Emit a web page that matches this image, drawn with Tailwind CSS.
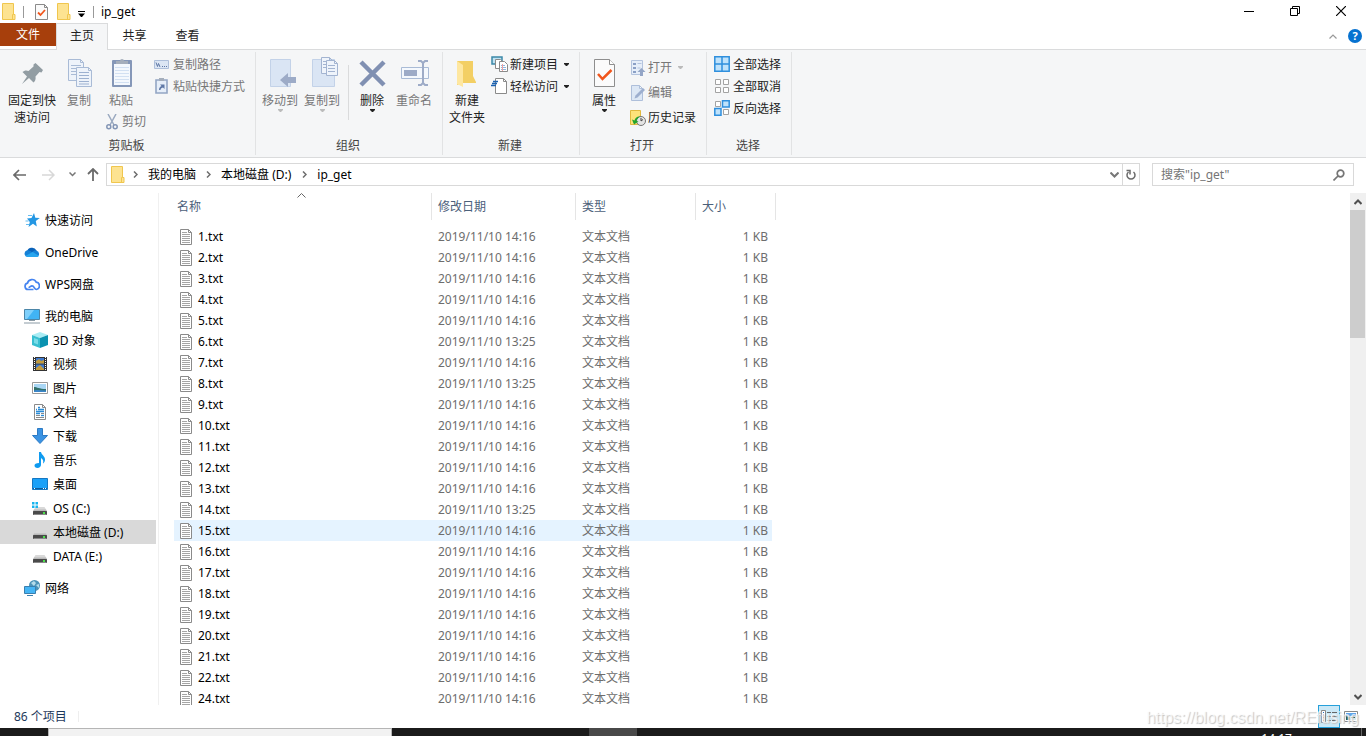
<!DOCTYPE html>
<html lang="zh-CN">
  <head>
    <meta charset="UTF-8" />
    <meta name="viewport" content="width=device-width, initial-scale=1.0" />
    <title>ip_get</title>
    <script src="https://cdn.jsdelivr.net/npm/@tailwindcss/browser@4"></script>
  </head>
  <body>
    <!-- Shared icons -->
    <svg class="hidden">
      <symbol id="folder" viewBox="0 0 14 17">
        <path d="M.5.5h11v11h1.500v5H.5z" fill="#fde391" stroke="#f0c64e" />
        <path d="M10.500 16v-4.500h1" fill="none" stroke="#f0c64e" />
      </symbol>
      <symbol id="caret" viewBox="0 0 5 3">
        <path d="M0 0h5v1L3 3H2L0 1z" fill="currentColor" />
      </symbol>
      <symbol id="crumb" viewBox="0 0 5 7">
        <path d="M1 .5l3 3-3 3" fill="none" stroke="#6d6d6d" stroke-width="1.500" />
      </symbol>
      <symbol id="drive" viewBox="0 0 16 16">
        <path d="M3.500 7h9L15 11H1z" fill="#d9d9d9" />
        <path d="M2 9.500h12l1 2H1z" fill="#b9b9b9" />
        <rect x="1" y="11" width="14" height="4" rx=".5" fill="#4a4a4a" />
        <path d="M1.500 14.500h13" stroke="#8a8a8a" />
        <rect x="11" y="12" width="2" height="2" fill="#4be34b" />
      </symbol>
    </svg>

    <div
      class="flex flex-col h-screen overflow-hidden bg-white text-black text-[12px] leading-[17px] font-['Noto_Sans','Noto_Sans_CJK_SC',sans-serif]"
    >
      <!-- Title bar -->
      <header class="shrink-0 h-[23px] flex items-center">
        <svg class="w-[14px] h-[17px] ml-[2px]"><use href="#folder" /></svg>
        <div class="w-px h-3 bg-[#999] ml-[7px]"></div>
        <button class="ml-[11px]" aria-label="属性">
          <svg class="block w-[13px] h-4" viewBox="0 0 13 16">
            <path d="M.5.5h9l3 3v12H.5z" fill="#fafafa" stroke="#8a8a8a" />
            <path d="M9.500.5v3h3" fill="none" stroke="#8a8a8a" />
            <path d="M3 8.500l2.500 2.500L10 6" fill="none" stroke="#f1561c" stroke-width="1.800" />
          </svg>
        </button>
        <button class="ml-[9px]" aria-label="新建文件夹">
          <svg class="block w-[14px] h-[17px]"><use href="#folder" /></svg>
        </button>
        <button class="ml-[7px]" aria-label="自定义快速访问工具栏">
          <svg class="block w-[7px] h-[6px] mt-1" viewBox="0 0 7 6">
            <path d="M0 .5h7" stroke="#000" />
            <path d="M0 2.500h7L4 6H3z" />
          </svg>
        </button>
        <div class="w-px h-3 bg-[#999] ml-2"></div>
        <h1 class="ml-[7px] text-[12px]">ip_get</h1>
        <div class="ml-auto mr-[2px] flex items-center h-full">
          <button class="w-[46px] h-[21px] self-start flex items-center justify-center" aria-label="最小化">
            <svg class="w-[10px] h-[10px]" viewBox="0 0 10 10"><path d="M0 5.500h10" stroke="#000" /></svg>
          </button>
          <button class="w-[46px] h-[21px] self-start flex items-center justify-center" aria-label="向下还原">
            <svg class="w-[10px] h-[10px]" viewBox="0 0 10 10" fill="none" stroke="#000">
              <path d="M.5 2.500h7v7h-7zM2.500 2.500v-2h7v7h-2" />
            </svg>
          </button>
          <button class="w-[46px] h-[21px] self-start flex items-center justify-center" aria-label="关闭">
            <svg class="w-[10px] h-[10px]" viewBox="0 0 10 10"><path d="M0 0l10 10M10 0L0 10" stroke="#000" stroke-width="1.200" /></svg>
          </button>
        </div>
      </header>

      <!-- Ribbon tabs -->
      <nav class="shrink-0 h-[27px] flex text-[#222] border-b border-[#dadbdc]">
        <button class="w-14 h-[23px] bg-[#a73f0c] text-white">文件</button>
        <button class="w-[52px] h-[27px] pb-[3px] bg-[#f5f6f7] border border-b-0 border-[#dadbdc]">主页</button>
        <button class="w-[53px] pb-[2px]">共享</button>
        <button class="w-[53px] pb-[2px]">查看</button>
        <div class="ml-auto mr-1 flex items-center gap-[11px]">
          <button aria-label="最小化功能区">
            <svg class="block w-[8px] h-[5px]" viewBox="0 0 8 5"><path d="M.5 4.500L4 1l3.500 3.500" fill="none" stroke="#999" stroke-width="1.200" /></svg>
          </button>
          <button class="size-[14px] rounded-full bg-[#0672d0] text-white text-[11px] leading-[14px] font-bold" aria-label="帮助">?</button>
        </div>
      </nav>

      <!-- Ribbon -->
      <section class="shrink-0 flex h-[108px] py-[2px] bg-[#f5f6f7] border-b border-[#dadbdc] text-[#222]">
        <div class="w-64 flex flex-col border-r border-[#e2e3e4]">
          <div class="flex-1 flex pl-1 pt-1">
            <button class="w-14 flex flex-col items-center justify-start">
              <svg class="size-9" viewBox="0 0 36 36">
                <path d="M19.500 8.500l2-1.500 7.500 7-1.500 2.500-2-.5-4 4.500c.5 3-.5 5-2 6l-4.500-4.500-7 6 5-7.500-4.500-4.500c1.500-1.500 4-2 6-1l5-4.500z" fill="#929da3" />
              </svg>
              <span>固定到快<br />速访问</span>
            </button>
            <button class="w-[38px] flex flex-col items-center justify-start text-[#777]" disabled>
              <svg class="size-9" viewBox="0 0 36 36" fill="#eef3fa" stroke="#a9bbd6">
                <path d="M7.500 3.500h12l3 3v18h-15zM19.500 3.500v3h3" />
                <path d="M10 9.500h10M10 12.500h10M10 15.500h10M10 18.500h10" />
                <path d="M15.500 11.500h12l3 3v16h-15zM27.500 11.500v3h3" />
                <path d="M18 16.500h10M18 19.500h10M18 22.500h10M18 25.500h10M18 28h10" stroke="#9db1d0" />
              </svg>
              <span>复制</span>
            </button>
            <div class="w-14">
              <button class="w-[46px] flex flex-col items-center justify-start text-[#777]" disabled>
                <svg class="size-9" viewBox="0 0 36 36">
                  <rect x="9" y="4" width="20" height="27" rx="1" fill="#8597b8" />
                  <path d="M11 8h16v21H11z" fill="#f4f8fd" />
                  <path d="M12 11.500h14M12 14.500h14M12 17.500h14M12 20.500h14M12 23.500h14M12 26.500h14" stroke="#d2e0f2" />
                  <path d="M13 8V5h4a2 2 0 014 0h4v3z" fill="#a5aebb" />
                </svg>
                <span>粘贴</span>
              </button>
              <button class="ml-2 mt-1 flex items-center gap-1 text-[#777]" disabled>
                <svg class="w-3 h-4" viewBox="0 0 12 16" fill="none" stroke="#9aa9c0" stroke-width="1.500">
                  <path d="M2 0l6 11M10 0L4 11" />
                  <circle cx="2.800" cy="12.800" r="2" stroke="#8395b5" />
                  <circle cx="9.200" cy="12.800" r="2" stroke="#8395b5" />
                </svg>
                <span>剪切</span>
              </button>
            </div>
            <div class="text-[#777] flex flex-col items-start -mt-[3px]">
              <button class="h-[22px] flex items-center gap-1 whitespace-nowrap" disabled>
                <svg class="w-[15px] h-[9px]" viewBox="0 0 15 9">
                  <path d="M.5.5h14v8H.5z" fill="#dce6f4" stroke="#aebfda" />
                  <path d="M2 2.500l1.500 4 1-3 1.500 3.500M8 6.500h1M10 6.500h1M12 6.500h1" fill="none" stroke="#5e77a5" />
                </svg>
                <span>复制路径</span>
              </button>
              <button class="h-[22px] flex items-center gap-1 whitespace-nowrap" disabled>
                <svg class="w-[15px] h-4" viewBox="0 0 15 16">
                  <path d="M2 2h11v13H2z" fill="#e6eef9" stroke="#93a5c4" stroke-width="1.600" />
                  <path d="M5 0h5v3H5z" fill="#a5aebb" />
                  <path d="M5 12c0-2 .5-3 2.500-4L6 6.500h4.500V11L9 9.500C7 10 6.500 11 6.500 12z" fill="#5f78a6" />
                </svg>
                <span>粘贴快捷方式</span>
              </button>
            </div>
          </div>
          <div class="text-center h-[18px] pr-[2px] text-[#444]">剪贴板</div>
        </div>

        <div class="w-[187px] flex flex-col border-r border-[#e2e3e4]">
          <div class="flex-1 flex pl-[3px] pt-1">
            <button class="w-[42px] flex flex-col items-center justify-start text-[#777]" disabled>
              <svg class="size-9" viewBox="0 0 36 36">
                <path d="M8.500 3.500h20v27h-20z" fill="#dae5f4" stroke="#c3d2e8" />
                <path d="M18 24l8-7v4h8v6h-8v4z" fill="#9dabc7" />
              </svg>
              <span>移动到</span>
              <svg class="w-[5px] h-[3px] text-[#bbb]"><use href="#caret" /></svg>
            </button>
            <button class="w-[42px] flex flex-col items-center justify-start text-[#777]" disabled>
              <svg class="size-9" viewBox="0 0 36 36">
                <path d="M8.500 3.500h22v27h-22z" fill="#dae5f4" stroke="#c3d2e8" />
                <g fill="#eff4fb" stroke="#a3b4d1">
                  <path d="M17.500 1.500h8l3 3v13h-11zM25.500 1.500v3h3M19 5.500h5M19 8.500h5M19 11.500h5" />
                  <path d="M22.500 4.500h8l3 3v12h-11zM30.500 4.500v3h3M24 9.500h7M24 12.500h7M24 15.500h7" />
                </g>
              </svg>
              <span>复制到</span>
              <svg class="w-[5px] h-[3px] text-[#bbb]"><use href="#caret" /></svg>
            </button>
            <div class="w-px h-[55px] mt-[9px] ml-[5px] mr-1 bg-[#dadbdc]"></div>
            <button class="w-[38px] flex flex-col items-center justify-start">
              <svg class="size-9" viewBox="0 0 36 36">
                <path d="M7 6l23 23M30 6L7 29" stroke="#8090b2" stroke-width="4.500" />
              </svg>
              <span>删除</span>
              <svg class="w-[5px] h-[3px]"><use href="#caret" /></svg>
            </button>
            <button class="w-[46px] flex flex-col items-center justify-start text-[#777]" disabled>
              <svg class="size-9" viewBox="0 0 36 36">
                <path d="M5.500 11.500h27v11h-27z" fill="#f4f8fd" stroke="#a9bbd6" />
                <path d="M8 14h13v6H8z" fill="#9dabc7" />
                <path d="M22 5h3l2 2 2-2h3M22 29h3l2-2 2 2h3M27 6v22" fill="none" stroke="#9dabc7" stroke-width="2" />
              </svg>
              <span>重命名</span>
            </button>
          </div>
          <div class="text-center h-[18px] pr-[2px] text-[#444]">组织</div>
        </div>

        <div class="w-[137px] flex flex-col border-r border-[#e2e3e4]">
          <div class="flex-1 flex pl-[2px] pt-1">
            <button class="w-[44px] mr-[2px] flex flex-col items-center justify-start">
              <svg class="size-9" viewBox="0 0 36 36">
                <path d="M8 5h16v15l3 6v1H14L8 29z" fill="#f3cf64" />
                <path d="M8 5l6 4v22l-6-3z" fill="#fee7a0" />
              </svg>
              <span>新建<br />文件夹</span>
            </button>
            <div class="flex flex-col items-start -mt-[3px]">
              <button class="h-[22px] flex items-center gap-[2px]">
                <svg class="w-[17px] h-4" viewBox="0 0 17 16">
                  <path d="M1 1h10v7H1z" fill="#bfe3f3" stroke="#3b88a8" stroke-width="1.500" />
                  <path d="M4.500 3.500h5l2 2v7h-7z" fill="#fff" stroke="#8a8a8a" />
                  <path d="M8.500 5.500h5l3 3v7h-8z" fill="#fff" stroke="#8a8a8a" />
                  <path d="M10 9.500h4M10 11.500h5M10 13.500h5" stroke="#8fb6df" />
                  <path d="M11.500 8v7" stroke="#f0a0a0" />
                </svg>
                <span>新建项目</span>
                <svg class="w-[5px] h-[3px] ml-1"><use href="#caret" /></svg>
              </button>
              <button class="h-[22px] flex items-center gap-[2px]">
                <svg class="w-[17px] h-4" viewBox="0 0 17 16">
                  <path d="M4.500.5h8l3 3v12h-11z" fill="#fff" stroke="#8a8a8a" />
                  <path d="M12.500.5v3h3" fill="none" stroke="#8a8a8a" />
                  <path d="M2 3.500h5M1 5.500h5M0 7.500h5" stroke="#1c62b0" stroke-width="1.300" />
                </svg>
                <span>轻松访问</span>
                <svg class="w-[5px] h-[3px] ml-1"><use href="#caret" /></svg>
              </button>
            </div>
          </div>
          <div class="text-center h-[18px] pr-[2px] text-[#444]">新建</div>
        </div>

        <div class="w-[127px] flex flex-col border-r border-[#e2e3e4]">
          <div class="flex-1 flex pt-1">
            <button class="w-12 mr-[2px] flex flex-col items-center justify-start">
              <svg class="size-9" viewBox="0 0 36 36">
                <path d="M8.500 3.500h15l5 5v22h-20z" fill="#fbfbfb" stroke="#8e8e8e" />
                <path d="M23.500 3.500v5h5" fill="#fff" stroke="#8e8e8e" />
                <path d="M12 18l4.500 5 9-9" fill="none" stroke="#f1561c" stroke-width="2.500" />
              </svg>
              <span>属性</span>
              <svg class="w-[5px] h-[3px]"><use href="#caret" /></svg>
            </button>
            <div class="flex flex-col items-start -mt-px">
              <button class="h-[25px] flex items-center gap-[2px] text-[#777]" disabled>
                <svg class="size-4" viewBox="0 0 16 16">
                  <path d="M1.500.5h11v14h-11z" fill="#e6eef9" stroke="#b4c4de" />
                  <path d="M3 3h3v2H3zM3 7h3v2H3zM3 11h3v2H3z" fill="#8ba0c6" />
                  <path d="M7.500 3.500h4M7.500 8h3" stroke="#b4c4de" />
                  <path d="M11.500 8l4 4h-2.500v4h-3v-4H7.500z" fill="#93a5c6" />
                </svg>
                <span>打开</span>
                <svg class="w-[5px] h-[3px] ml-1 text-[#bbb]"><use href="#caret" /></svg>
              </button>
              <button class="h-[25px] flex items-center gap-[2px] text-[#777]" disabled>
                <svg class="size-4" viewBox="0 0 16 16">
                  <path d="M1.500.5h8l3 3v12h-11zM9.500.5v3h3" fill="#dce7f5" stroke="#aebfda" />
                  <path d="M4.500 13.500l1-3L13 3l2 2-7.500 7.500z" fill="#9dafcf" />
                </svg>
                <span>编辑</span>
              </button>
              <button class="h-[25px] flex items-center gap-[2px]">
                <svg class="size-4" viewBox="0 0 16 16">
                  <path d="M.5.5h10v14H.5z" fill="#fde37a" stroke="#e0b93f" />
                  <circle cx="11" cy="11" r="4.500" fill="#e4e4e4" stroke="#777" />
                  <path d="M11 8v3l2-1.500" fill="none" stroke="#444" />
                  <path d="M2 9.500l2 5 4.500-3-2-.5c.5-2 1.500-3.500 4-4.500-3.500-.5-5.500 1.500-6 4z" fill="#23a52b" />
                </svg>
                <span>历史记录</span>
              </button>
            </div>
          </div>
          <div class="text-center h-[18px] pr-[2px] text-[#444]">打开</div>
        </div>

        <div class="w-[85px] flex flex-col border-r border-[#e2e3e4]">
          <div class="flex-1 flex flex-col items-start pl-[7px] pt-px">
            <button class="h-[22px] flex items-center gap-[3px]">
              <svg class="size-4" viewBox="0 0 16 16" fill="#bfe2fb" stroke="#2f8fdd" stroke-width="1.500">
                <path d="M.8.8H8v7.200H.8zM8 .8h7.200V8H8zM.8 8H8v7.200H.8zM8 8h7.200v7.200H8z" />
              </svg>
              <span>全部选择</span>
            </button>
            <button class="h-[22px] flex items-center gap-[3px]">
              <svg class="size-4" viewBox="0 0 16 16" fill="#fff" stroke="#a3a3a3">
                <path d="M1.500 1.500h5v5h-5zM9.500 1.500h5v5h-5zM1.500 9.500h5v5h-5zM9.500 9.500h5v5h-5z" />
              </svg>
              <span>全部取消</span>
            </button>
            <button class="h-[22px] flex items-center gap-[3px]">
              <svg class="size-4" viewBox="0 0 16 16">
                <path d="M1.500 1.500h5v5h-5zM9.500 9.500h5v5h-5z" fill="#fff" stroke="#a3a3a3" />
                <path d="M8.500.8h6.700V7H8.500zM.8 8.500H7v6.700H.8z" fill="#bfe2fb" stroke="#2f8fdd" stroke-width="1.500" />
              </svg>
              <span>反向选择</span>
            </button>
          </div>
          <div class="text-center h-[18px] pr-[2px] text-[#444]">选择</div>
        </div>
      </section>

      <!-- Address bar -->
      <section class="shrink-0 h-[35px] flex items-start pt-[5px] pr-3">
        <div class="w-[106px] h-[23px] flex items-center pl-[13px]">
          <button aria-label="后退">
            <svg class="block w-[13px] h-3" viewBox="0 0 13 12" fill="none" stroke="#6a6a6a" stroke-width="1.700"><path d="M6 1L1 6l5 5M1 6h12" /></svg>
          </button>
          <button class="ml-4" aria-label="前进" disabled>
            <svg class="block w-[13px] h-3" viewBox="0 0 13 12" fill="none" stroke="#d8d8d8" stroke-width="1.500"><path d="M7 1l5 5-5 5M12 6H0" /></svg>
          </button>
          <button class="ml-[14px]" aria-label="最近浏览的位置">
            <svg class="block w-[7px] h-[5px]" viewBox="0 0 7 5" fill="none" stroke="#777" stroke-width="1.500"><path d="M.5.5l3 3 3-3" /></svg>
          </button>
          <button class="ml-[11px]" aria-label="上移">
            <svg class="block w-3 h-[13px]" viewBox="0 0 12 13" fill="none" stroke="#6a6a6a" stroke-width="1.800"><path d="M1 6l5-5 5 5M6 1v12" /></svg>
          </button>
        </div>
        <div class="flex-1 h-[23px] flex items-center border border-[#d9d9d9] pl-1">
          <svg class="w-[14px] h-[17px]"><use href="#folder" /></svg>
          <svg class="w-[5px] h-[7px] ml-2"><use href="#crumb" /></svg>
          <a href="#" class="ml-[10px]">我的电脑</a>
          <svg class="w-[5px] h-[7px] ml-[10px]"><use href="#crumb" /></svg>
          <a href="#" class="ml-[10px]">本地磁盘 (D:)</a>
          <svg class="w-[5px] h-[7px] ml-[11px]"><use href="#crumb" /></svg>
          <a href="#" class="ml-[10px]">ip_get</a>
          <button class="ml-auto mr-[3px]" aria-label="以前的位置">
            <svg class="block w-[9px] h-[6px]" viewBox="0 0 9 6" fill="none" stroke="#777" stroke-width="2"><path d="M.5.5l4 4 4-4" /></svg>
          </button>
          <button class="w-[17px] h-full flex items-center justify-center border-l border-[#d9d9d9]" aria-label="刷新">
            <svg class="w-[10px] h-3" viewBox="0 0 10 12" fill="none" stroke="#6a6a6a" stroke-width="1.500"><path d="M2.500 3a4 4 0 105 0M.5 1.500h3.500v4" /></svg>
          </button>
        </div>
        <label class="ml-3 w-[202px] h-[23px] flex items-center border border-[#d9d9d9] pl-2 pr-2">
          <input type="search" aria-label="搜索" placeholder='搜索"ip_get"' class="flex-1 min-w-0 outline-none placeholder:text-[#757575]" />
          <svg class="w-3 h-3" viewBox="0 0 12 12" fill="none" stroke="#757575" stroke-width="1.700"><circle cx="7.500" cy="4.500" r="3.300" /><path d="M5 7l-4.500 4.500" /></svg>
        </label>
      </section>

      <main class="flex-1 min-h-0 flex">
        <!-- Navigation pane -->
        <aside class="w-[159px] shrink-0 border-r border-[#f0f0f0] pt-[15px]">
          <ul class="flex flex-col gap-2">
            <li>
              <a href="#" class="h-6 flex items-center pl-6 gap-[5px]">
                <svg class="size-4" viewBox="0 0 16 16">
                  <path d="M10 1l1.300 4.700 4.500.3-4 3 1 5.500L9 11.700 4.500 15l1.300-5L3 6.500l4.500-.5z" fill="#2497e3" />
                  <path d="M4 3.500h4M1.500 9h3M2 12.500h3" stroke="#66bdf0" />
                </svg>
                快速访问
              </a>
            </li>
            <li>
              <a href="#" class="h-6 flex items-center pl-6 gap-[5px]">
                <svg class="size-4" viewBox="0 0 16 16">
                  <path d="M3 8.500a5 5 0 019.500-2L14 9l-7 2z" fill="#0a62b9" />
                  <path d="M3.500 13A3.500 3.500 0 013 6.200c2 0 3 .5 5 2 1.500-1.500 3-2 4.500-1.500A3.300 3.300 0 0113 13z" fill="#1580d6" />
                  <path d="M1.200 12l7.500-4 6.500 4-2.200 1H3.500z" fill="#27a5ee" />
                </svg>
                OneDrive
              </a>
            </li>
            <li>
              <a href="#" class="h-6 flex items-center pl-6 gap-[5px]">
                <svg class="size-4" viewBox="0 0 16 16" fill="none" stroke="#4584f0" stroke-width="1.700">
                  <path d="M9.500 13.500H4a3.200 3.200 0 01-.5-6.300 4.600 4.600 0 018.700-1A3.700 3.700 0 0112.500 13.500c-2.500 0-2-3.700-4.500-3.700-1.500 0-2 1.700-3.500 1.700" />
                </svg>
                WPS网盘
              </a>
            </li>
            <li>
              <a href="#" class="h-6 flex items-center pl-6 gap-[5px]">
                <svg class="size-4" viewBox="0 0 16 16">
                  <path d="M.5 1.500h15v10H.5z" fill="#41b4f5" stroke="#4c86a8" />
                  <path d="M1 2h9L3 11H1z" fill="#7fd0fb" />
                  <path d="M5 12.500h6M0 15h16" stroke="#8a9aa5" />
                </svg>
                我的电脑
              </a>
              <ul>
                <li>
                  <a href="#" class="h-6 flex items-center pl-8 gap-[5px]">
                    <svg class="size-4" viewBox="0 0 16 16">
                      <path d="M8 0l8 3-8 3-8-3z" fill="#a9ecf4" />
                      <path d="M0 3l8 3v10l-8-3z" fill="#38bfd0" />
                      <path d="M16 3L8 6v10l8-3z" fill="#0a92b0" />
                      <path d="M2 6l4 1.500v5L2 11z" fill="#79dce8" />
                    </svg>
                    3D 对象
                  </a>
                </li>
                <li>
                  <a href="#" class="h-6 flex items-center pl-8 gap-[5px]">
                    <svg class="size-4" viewBox="0 0 16 16">
                      <path d="M1 1h14v14H1z" fill="#333" />
                      <path d="M4 2h8v5.500H4zM4 8.500h8V14H4z" fill="#3f7ad0" />
                      <path d="M4 5l3-2 2 2 3-1v3.500H4zM4 12l4-3 4 4v1H4z" fill="#c29a3c" />
                      <path d="M2.500 1v14M13.500 1v14" stroke="#fff" stroke-dasharray="1 1" />
                    </svg>
                    视频
                  </a>
                </li>
                <li>
                  <a href="#" class="h-6 flex items-center pl-8 gap-[5px]">
                    <svg class="size-4" viewBox="0 0 16 16">
                      <path d="M.5 2.500h15v11H.5z" fill="#fff" stroke="#999" />
                      <path d="M2 4h12v8H2z" fill="#a9d6f4" />
                      <path d="M2 7c3 0 5 2 12 2v3H2z" fill="#31706a" />
                      <path d="M2 10.500c4-1 8 0 12 0V12H2z" fill="#3b86c8" />
                    </svg>
                    图片
                  </a>
                </li>
                <li>
                  <a href="#" class="h-6 flex items-center pl-8 gap-[5px]">
                    <svg class="size-4" viewBox="0 0 16 16">
                      <path d="M2.500.5h8l3 3v12h-11zM10.500.5v3h3" fill="#fff" stroke="#8a8a8a" />
                      <path d="M4 5.500h1M6 3.500h2M6 5.500h6M4 7.500h8M4 9.500h4" stroke="#2b8bd6" stroke-width="1.400" />
                      <path d="M9 9.500h3M4 11.500h4M4 13.500h8" stroke="#8a8a8a" />
                      <path d="M9 11.500h3" stroke="#2b8bd6" stroke-width="1.400" />
                    </svg>
                    文档
                  </a>
                </li>
                <li>
                  <a href="#" class="h-6 flex items-center pl-8 gap-[5px]">
                    <svg class="size-4" viewBox="0 0 16 16"><path d="M5.500.5h5v7h5L8 15.500.5 7.500h5z" fill="#3a93e3" stroke="#2c7ac4" /></svg>
                    下载
                  </a>
                </li>
                <li>
                  <a href="#" class="h-6 flex items-center pl-8 gap-[5px]">
                    <svg class="size-4" viewBox="0 0 16 16">
                      <path d="M7 0h2c.5 3 4 4 4 7.500 0 2-1 3.500-2 4 .5-2 .5-4-2-5.500V13c0 1.500-1.500 3-3.500 3S2.500 15 2.500 13.500 4 11 7 11z" fill="#0f9bf0" />
                    </svg>
                    音乐
                  </a>
                </li>
                <li>
                  <a href="#" class="h-6 flex items-center pl-8 gap-[5px]">
                    <svg class="size-4" viewBox="0 0 16 16">
                      <path d="M.5 2.500h15v11H.5z" fill="#1ba1f8" stroke="#1577c2" />
                      <path d="M1 12.500h14" stroke="#0c5c9c" />
                      <path d="M2 12.500h1M11 12.500h1M13 12.500h1" stroke="#fff" />
                    </svg>
                    桌面
                  </a>
                </li>
                <li>
                  <a href="#" class="h-6 flex items-center pl-8 gap-[5px]">
                    <svg class="size-4" viewBox="0 0 16 16">
                      <use href="#drive" />
                      <path d="M0 2h2.500v2.500H0zM3.500 2H6v2.500H3.500zM0 5.500h2.500V8H0zM3.500 5.500H6V8H3.500z" fill="#18b4ee" />
                    </svg>
                    OS (C:)
                  </a>
                </li>
                <li>
                  <a href="#" class="h-6 flex items-center pl-8 gap-[5px] mr-[2px] bg-[#d9d9d9]" aria-current="true">
                    <svg class="size-4"><use href="#drive" /></svg>
                    本地磁盘 (D:)
                  </a>
                </li>
                <li>
                  <a href="#" class="h-6 flex items-center pl-8 gap-[5px]">
                    <svg class="size-4"><use href="#drive" /></svg>
                    DATA (E:)
                  </a>
                </li>
              </ul>
            </li>
            <li>
              <a href="#" class="h-6 flex items-center pl-6 gap-[5px]">
                <svg class="size-4" viewBox="0 0 16 16">
                  <circle cx="10.500" cy="5.500" r="5.500" fill="#4d94b8" />
                  <path d="M7 3l3-2 2 2-2 3zM12 5l3-1v4z" fill="#b5dcea" />
                  <path d="M.5 6.500h11v7H.5z" fill="#45b5f5" stroke="#3a7fae" />
                  <path d="M3 15.500h6" stroke="#3a7fae" />
                </svg>
                网络
              </a>
            </li>
          </ul>
        </aside>

        <!-- File list -->
        <div class="flex-1 min-w-0 overflow-hidden pl-[15px]">
          <table class="table-fixed border-separate border-spacing-0 w-[602px] text-[#6d6d6d]">
            <colgroup>
              <col class="w-[258px]" />
              <col class="w-[144px]" />
              <col class="w-[120px]" />
              <col class="w-[80px]" />
            </colgroup>
            <thead>
              <tr class="h-[33px] text-left align-top text-[#4c607a]">
                <th class="relative p-0 font-normal">
                  <div class="h-[27px] flex items-center pl-[3px] border-r border-[#e5e5e5]">名称</div>
                  <svg class="absolute top-0 left-[123px] w-[9px] h-[5px]" viewBox="0 0 9 5"><path d="M.5 4.500l4-4 4 4" fill="none" stroke="#666" /></svg>
                </th>
                <th class="p-0 font-normal"><div class="h-[27px] flex items-center pl-[6px] border-r border-[#e5e5e5]">修改日期</div></th>
                <th class="p-0 font-normal"><div class="h-[27px] flex items-center pl-[6px] border-r border-[#e5e5e5]">类型</div></th>
                <th class="p-0 font-normal"><div class="h-[27px] flex items-center pl-[6px] border-r border-[#e5e5e5]">大小</div></th>
              </tr>
            </thead>
            <tbody id="files"></tbody>
          </table>
          <template id="row">
            <tr class="h-[21px] data-hover:bg-[#e5f3ff]">
              <td class="p-0">
                <div class="flex items-center pl-[6px] gap-[6px] text-black">
                  <svg class="w-3 h-4" viewBox="0 0 12 16">
                    <path d="M.5.500h8l3 3v12H.5z" fill="#fff" stroke="#8a8a8a" />
                    <path d="M8.500.5v3h3" fill="none" stroke="#8a8a8a" />
                    <path d="M2 3.500h5M2 5.500h8M2 7.500h8M2 9.500h8M2 11.500h8M2 13.500h8" stroke="#a5a5a5" />
                  </svg>
                  <span data-name></span>
                </div>
              </td>
              <td class="p-0 pl-[6px]" data-date></td>
              <td class="p-0 pl-[6px]">文本文档</td>
              <td class="p-0 pr-1 text-right border-r-4 border-white">1 KB</td>
            </tr>
          </template>
        </div>

        <!-- Scrollbar -->
        <div class="w-4 shrink-0 flex flex-col bg-[#f0f0f0]">
          <button class="h-[17px] flex items-center justify-center" aria-label="向上滚动">
            <svg class="w-[8px] h-[6px]" viewBox="0 0 8 6"><path d="M.5 5L4 1.500 7.500 5" fill="none" stroke="#505050" stroke-width="2" /></svg>
          </button>
          <div class="h-32 mr-px bg-[#cdcdcd]"></div>
          <button class="mt-auto h-[17px] flex items-center justify-center" aria-label="向下滚动">
            <svg class="w-[8px] h-[6px]" viewBox="0 0 8 6"><path d="M.5 1L4 4.500 7.500 1" fill="none" stroke="#505050" stroke-width="2" /></svg>
          </button>
        </div>
      </main>

      <!-- Status bar -->
      <footer class="relative shrink-0 h-[23px] flex items-center pl-[14px] pr-2 text-[#1e395b]">
        <span>86 个项目</span>
        <div class="w-px h-[11px] ml-[11px] bg-[#eee]"></div>
        <button class="ml-auto w-[22px] h-[23px] flex items-center justify-center bg-[#cbe8f6] border border-[#26a0da]" aria-label="详细信息">
          <svg class="w-4 h-[13px]" viewBox="0 0 16 13">
            <path d="M.5.5h4v12h-4z" fill="#fff" stroke="#888" />
            <path d="M2 2.500h1M2 5h1" stroke="#2b6fc0" />
            <path d="M2 7.500h1M2 10.500h1" stroke="#d05030" />
            <path d="M6 2.500h4M11 2.500h5M6 6.500h4M11 6.500h5M6 10.500h4M11 10.500h5" stroke="#666" />
          </svg>
        </button>
        <button class="ml-1" aria-label="大缩略图">
          <svg class="block w-[14px] h-[11px]" viewBox="0 0 14 11">
            <path d="M.5.5h13v10H.5z" fill="#fff" stroke="#888" />
            <path d="M2 2h10v7H2z" fill="#5fa5ea" />
            <path d="M2 5h10v4H2z" fill="#d5e8ee" />
            <path d="M2 5l4 1v3H2zM7 6h4v1H7z" fill="#2d5c4e" />
          </svg>
        </button>
        <div class="absolute right-[7px] top-1 text-[16px] leading-[18px] font-['Liberation_Sans',sans-serif] text-white/70 text-shadow-[1px_1px_1px_#c4c4c4]">https://blog.csdn.net/REfusing</div>
      </footer>

      <!-- Taskbar -->
      <div class="shrink-0 h-2 flex overflow-hidden bg-[#1b1b1b]">
        <div class="w-[344px] ml-12 bg-[#f2f2f2] border border-b-0 border-[#b5b5b5]"></div>
        <div class="w-12 ml-[197px] bg-[#484848]"></div>
        <div class="ml-auto mr-[69px] pt-1 text-white leading-[14px]">14:17</div>
        <div class="w-px mr-1 bg-[#666]"></div>
      </div>
    </div>

    <script>
      const names = [...Array(22).keys()].map((i) => i + 1).concat(24);
      const earlier = [6, 8, 14];
      const body = document.getElementById("files");
      const row = document.getElementById("row");
      for (const n of names) {
        const tr = row.content.cloneNode(true);
        tr.querySelector("[data-name]").textContent = n + ".txt";
        tr.querySelector("[data-date]").textContent =
          "2019/11/10 " + (earlier.includes(n) ? "13:25" : "14:16");
        if (n === 15) tr.firstElementChild.dataset.hover = "1";
        body.append(tr);
      }
    </script>
  </body>
</html>
